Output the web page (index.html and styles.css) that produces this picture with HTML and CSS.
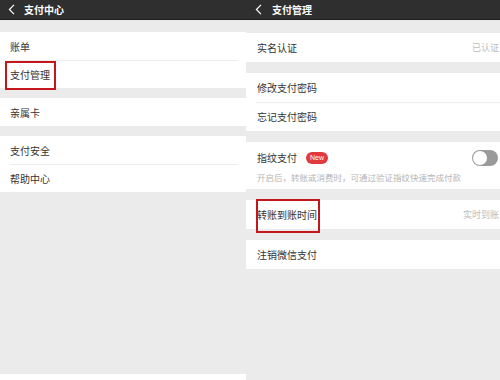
FILE: index.html
```html
<!DOCTYPE html>
<html lang="zh-CN">
<head>
  <meta charset="UTF-8">
  <meta name="viewport" content="width=device-width, initial-scale=1.0">
  <title>支付管理</title>
  <link rel="stylesheet" href="styles.css">
</head>
<body>
  <div class="screen screen-left">
    <div class="topbar">
      <svg class="back" width="7" height="11" viewBox="0 0 7 11"><path d="M6 0.8 L1.4 5.5 L6 10.2" fill="none" stroke="#fff" stroke-width="1.2"/></svg>
      <span class="title">支付中心</span>
    </div>

    <div class="group first">
      <div class="row">账单</div>
      <div class="row">
        支付管理
        <span class="mark mark-left"></span>
      </div>
    </div>
    <div class="group">
      <div class="row">亲属卡</div>
    </div>
    <div class="group">
      <div class="row">支付安全</div>
      <div class="row">帮助中心</div>
    </div>
  </div>

  <div class="screen screen-right">
    <div class="topbar">
      <svg class="back" width="7" height="11" viewBox="0 0 7 11"><path d="M6 0.8 L1.4 5.5 L6 10.2" fill="none" stroke="#fff" stroke-width="1.2"/></svg>
      <span class="title">支付管理</span>
    </div>

    <div class="group first">
      <div class="row">实名认证<span class="value">已认证</span></div>
    </div>
    <div class="group">
      <div class="row">修改支付密码</div>
      <div class="row">忘记支付密码</div>
    </div>
    <div class="group">
      <div class="row row-tall">
        <div class="line">
          <span>指纹支付</span>
          <span class="badge">New</span>
          <span class="switch"><span class="knob"></span></span>
        </div>
        <div class="desc">开启后，转账或消费时，可通过验证指纹快速完成付款</div>
      </div>
    </div>
    <div class="group">
      <div class="row">
        转账到账时间<span class="value">实时到账</span>
        <span class="mark mark-right"></span>
      </div>
    </div>
    <div class="group">
      <div class="row">注销微信支付</div>
    </div>
  </div>
</body>
</html>
```

FILE: styles.css
```css
body {
  margin: 0;
  width: 500px;
  height: 380px;
  display: flex;
  align-items: flex-start;
  background: #fff;
  font-family: "Noto Sans CJK SC", "Noto Sans", sans-serif;
  color: #333;
  overflow: hidden;
}
.screen {
  background: #ebebeb;
  overflow: hidden;
}
.screen-left {
  width: 246px;
  height: 374px;
}
.screen-right {
  flex: 1;
  height: 380px;
}
.topbar {
  height: 20px;
  background: #2f2f2f;
  border-bottom: 1px solid #1c1c1c;
  box-sizing: border-box;
  display: flex;
  align-items: center;
  padding-left: 8px;
}
.screen-right .topbar {
  padding-left: 9px;
}
.topbar .back {
  flex: none;
}
.topbar .title {
  color: #fff;
  font-size: 10px;
  font-weight: bold;
  margin-left: 9px;
}
.screen-right .topbar .title {
  margin-left: 10px;
}
.group {
  background: #fff;
  margin-top: 10px;
}
.group.first {
  margin-top: 12px;
}
.screen-right .group {
  margin-top: 11px;
}
.screen-right .group.first {
  margin-top: 13px;
}
.row {
  position: relative;
  height: 28px;
  display: flex;
  align-items: center;
  padding-left: 10px;
  font-size: 10px;
}
.screen-right .row {
  height: 29px;
  padding-left: 11px;
  padding-right: 1px;
}
.row + .row::before {
  content: "";
  position: absolute;
  top: 0;
  left: 10px;
  right: 8px;
  border-top: 1px solid #ececec;
}
.screen-right .row + .row::before {
  right: 0;
}
.value {
  margin-left: auto;
  font-size: 9px;
  color: #bdbdbd;
}
.row-tall {
  height: 47px;
  flex-direction: column;
  align-items: stretch;
  justify-content: center;
}
.screen-right .row-tall {
  height: 47px;
  padding-right: 2px;
}
.line {
  display: flex;
  align-items: center;
  height: 18px;
}
.badge {
  margin-left: 9px;
  background: #e0393e;
  color: #fff;
  font-family: "Liberation Sans", Arial, sans-serif;
  font-size: 7px;
  line-height: 12px;
  height: 12px;
  padding: 0 4px;
  border-radius: 6px;
}
.switch {
  margin-left: auto;
  width: 26px;
  height: 16px;
  border-radius: 8px;
  background: #9a9a9a;
  box-sizing: border-box;
  padding: 1px;
}
.knob {
  display: block;
  width: 14px;
  height: 14px;
  border-radius: 50%;
  background: #fff;
}
.desc {
  margin-top: 4px;
  font-size: 8.5px;
  color: #b5b5b5;
}
.mark {
  position: absolute;
  border: 2px solid #c4161c;
  box-sizing: border-box;
}
.mark-left {
  top: 1px;
  left: 5px;
  width: 51px;
  height: 29px;
}
.mark-right {
  top: -1px;
  left: 10px;
  width: 64px;
  height: 34px;
}
```
